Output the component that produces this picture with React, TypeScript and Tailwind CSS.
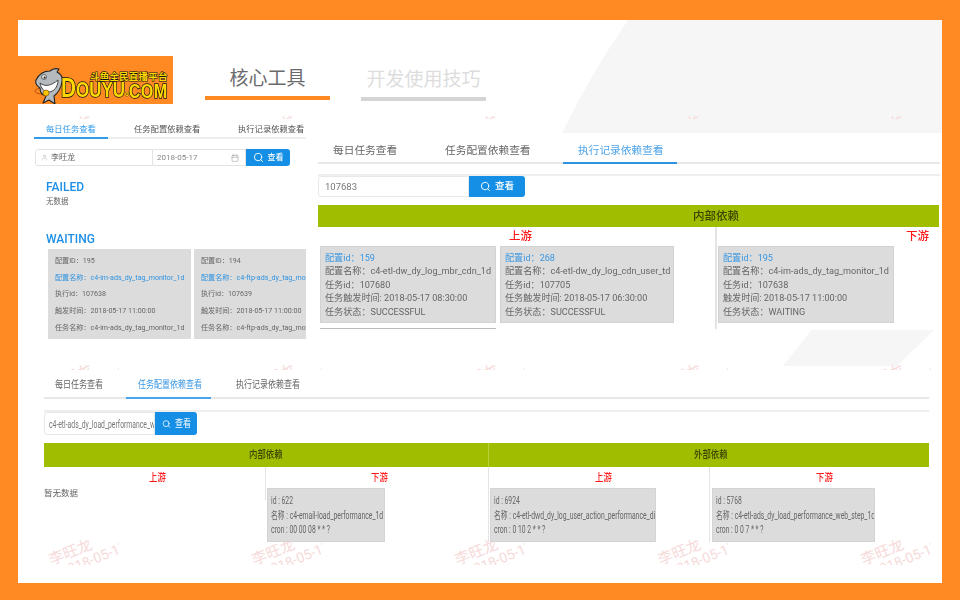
import { Calendar, Search, User } from "lucide-react"

const cjk = "font-['Roboto','Noto_Sans_CJK_SC',sans-serif]"

type Line = { text: string; blue?: boolean }

function Watermark() {
  return (
    <div className="w-[203px] shrink-0">
      <div className="w-[72px] h-[40px] overflow-hidden">
        <div className="-rotate-[22deg] origin-top-left translate-y-[14px] leading-[15px] text-[#f6dada] whitespace-nowrap">
          <div className="text-[15px]">李旺龙</div>
          <div className="text-[14px] pl-[6px]">2018-05-17 11:00:00</div>
        </div>
      </div>
    </div>
  )
}

function WatermarkStrip({ className, inner }: { className: string; inner: string }) {
  return (
    <div className={`absolute overflow-hidden pointer-events-none ${className}`}>
      <div className={`flex ${inner}`}>
        {[0, 1, 2, 3, 4].map((i) => (
          <Watermark key={i} />
        ))}
      </div>
    </div>
  )
}

function Logo() {
  return (
    <div className="relative w-[155px] h-[48px] bg-[#ff8a24] shrink-0 overflow-hidden">
      <svg className="absolute left-[16px] top-[12px]" width="36" height="37" viewBox="0 0 36 37">
        <ellipse cx="8" cy="23" rx="7" ry="3" fill="none" stroke="#b9560a" strokeWidth="1" />
        <path d="M2 12 C5 6 10 3 16 3 C18 1 21 0 25 1 L23 4 C27 6 29 10 28 14 C27 20 24 25 20 28 L21 36 L15 32 L9 35 L12 28 C8 27 6 24 6 20 C3 18 1 15 2 12 Z" fill="#b4babd" stroke="#222" strokeWidth="1.1" strokeLinejoin="round" />
        <path d="M6 15 C11 19 17 18 24 12 C24 19 20 24 14 24 C10 24 7 20 6 15 Z" fill="#fff" stroke="#222" strokeWidth="0.8" />
        <circle cx="10" cy="9" r="2.4" fill="#fff" stroke="#222" strokeWidth="0.7" />
        <circle cx="10.5" cy="9.5" r="1" fill="#111" />
        <circle cx="12" cy="25" r="3" fill="#ffc400" stroke="#8a5a00" strokeWidth="0.7" />
      </svg>
      <div className="absolute left-[43px] top-[19px] flex items-end font-['Liberation_Sans',sans-serif] font-bold text-[#ffd800] leading-none whitespace-nowrap [-webkit-text-stroke:1.6px_#111] [paint-order:stroke_fill] origin-left scale-x-[0.77]">
        <span className="text-[27px] leading-[27px]">D</span>
        <span className="text-[22px] leading-[24px]">OUYU</span>
        <span className="text-[8px] mb-[4px] [-webkit-text-stroke:0.6px_#111]">o</span>
        <span className="text-[21px] leading-[23px] tracking-[0.5px]">COM</span>
      </div>
      <div className="absolute left-[72px] top-[16px] font-['Noto_Sans_CJK_SC',sans-serif] font-bold text-[9.5px] leading-none text-[#ffd800] whitespace-nowrap [-webkit-text-stroke:1px_#111] [paint-order:stroke_fill] tracking-[0.2px]">
        斗鱼全民直播平台
      </div>
    </div>
  )
}

function NavTab({ label, active }: { label: string; active?: boolean }) {
  return (
    <div className={`w-[125px] text-center ${active ? "pt-px" : "pt-[2px]"}`}>
      <div className={`text-[19px] leading-[27px] ${active ? "text-[#6b6b6b]" : "text-[#dddddd]"}`}>{label}</div>
      <div className={`mt-[4px] h-[4px] ${active ? "bg-[#ff8a24]" : "bg-[#d4d4d4]"}`} />
    </div>
  )
}

function BlueButton({ className, squeeze }: { className: string; squeeze?: boolean }) {
  return (
    <div className={`flex items-center justify-center gap-[4px] bg-[#158fe6] text-white rounded-r-[3px] ${className}`}>
      <Search className={squeeze ? "w-[9px] h-[12px]" : "w-[11px] h-[11px]"} strokeWidth={2} />
      {squeeze ? (
        <span className="w-[16px]">
          <Narrow>查看</Narrow>
        </span>
      ) : (
        <span className="font-medium">查看</span>
      )}
    </div>
  )
}

function DailyCard({ id, name, exec }: { id: string; name: string; exec: string }) {
  const lines: Line[] = [
    { text: `配置ID：${id}` },
    { text: `配置名称：${name}`, blue: true },
    { text: `执行id：${exec}` },
    { text: "触发时间：2018-05-17 11:00:00" },
    { text: `任务名称：${name}` },
  ]
  return (
    <div className="w-[143px] shrink-0 h-[90px] bg-[#dcdcdc] pl-[7px] pt-[4px]">
      {lines.map((line) => (
        <div key={line.text} className={`text-[7.1px] leading-[16.7px] whitespace-nowrap ${line.blue ? "text-[#2f93e0]" : "text-[#666666]"}`}>
          {line.text}
        </div>
      ))}
    </div>
  )
}

function DailyPanel() {
  return (
    <div className="w-[272px] h-[220px] overflow-hidden shrink-0 blur-[0.3px]">
      <div className="flex h-[19px] border-b-2 border-[#eeeeee] text-[8.3px] leading-[18px] text-[#555555] whitespace-nowrap">
        <div className="w-[74px] h-[19px] border-b-2 border-[#2f9bea] pl-[12px] text-[#2f9bea]">每日任务查看</div>
        <div className="ml-[26px] w-[104px]">任务配置依赖查看</div>
        <div>执行记录依赖查看</div>
      </div>
      <div className="mt-[10px] flex h-[17px] text-[8px] text-[#666666]">
        <div className="ml-px w-[118px] flex items-center gap-[3px] pl-[5px] border border-[#e3e3e3] rounded-l-[3px]">
          <User className="w-[7px] h-[7px] text-[#bbbbbb]" />
          李旺龙
        </div>
        <div className="w-[93px] flex items-center justify-between pl-[4px] pr-[6px] border-y border-r border-[#e3e3e3] text-[#888888]">
          2018-05-17
          <Calendar className="w-[8px] h-[8px] text-[#aaaaaa]" />
        </div>
        <BlueButton className="w-[44px]" />
      </div>
      <div className="ml-[12px] mt-[13px] text-[12px] leading-[16px] font-medium text-[#1d8fe6]">FAILED</div>
      <div className="ml-[12px] text-[7.5px] leading-[13px] text-[#666666]">无数据</div>
      <div className="ml-[12px] mt-[23px] text-[12px] leading-[16px] font-medium text-[#1d8fe6]">WAITING</div>
      <div className="ml-[14px] mt-[2px] flex gap-[3px]">
        <DailyCard id="195" name="c4-im-ads_dy_tag_monitor_1d" exec="107638" />
        <DailyCard id="194" name="c4-ftp-ads_dy_tag_monitor_1d" exec="107639" />
      </div>
    </div>
  )
}

function RecordCard({ className, id, name, task, time, timeLabel, status }: { className: string; id: string; name: string; task: string; time: string; timeLabel: string; status: string }) {
  return (
    <div className={`h-[77px] bg-[#dcdcdc] border border-[#d2d2d2] pl-[4px] pt-[4.5px] text-[9.1px] leading-[13.5px] text-[#666666] whitespace-nowrap ${className}`}>
      <div className="text-[#3a97e2]">配置id：{id}</div>
      <div>配置名称：{name}</div>
      <div>任务id：{task}</div>
      <div>{timeLabel}: {time}</div>
      <div>任务状态：{status}</div>
    </div>
  )
}

function RecordPanel() {
  return (
    <div className="w-[622px] mt-[13px] h-[197px] bg-white overflow-hidden blur-[0.3px]">
      <div className="flex h-[31px] border-b-2 border-[#e8e8e8] text-[10.7px] leading-[36px] text-[#666666] whitespace-nowrap">
        <div className="ml-[15px] w-[112px]">每日任务查看</div>
        <div className="w-[118px]">任务配置依赖查看</div>
        <div className="ml-[15px] w-[84px] relative text-[#4ba3e8]">
          执行记录依赖查看
          <div className="absolute -left-[15px] -right-[15px] bottom-[-2px] h-[2px] bg-[#2f93e0]" />
        </div>
      </div>
      <div className="mt-[10px] h-[2px] bg-[#eeeeee]" />
      <div className="flex h-[21px]">
        <div className="w-[151px] pl-[6px] text-[9.5px] leading-[20px] text-[#777777] border border-[#e8e8e8] rounded-l-[3px]">107683</div>
        <BlueButton className="w-[56px] text-[9.5px]" />
      </div>
      <div className="mt-[8px] w-[621px] h-[22px] bg-[#a0bd00] pl-[375px] text-[11.5px] leading-[22px] font-medium text-[#3b4400]">内部依赖</div>
      <div className="flex">
        <div className="w-[399px] h-[102px] border-r-2 border-[#e4e4e4]">
          <div className="pl-[191px] text-[11.5px] leading-[19px] text-[#ff1a1a] font-medium">上游</div>
          <div className="flex gap-[4px] ml-[2px]">
            <RecordCard className="w-[176px]" id="159" name="c4-etl-dw_dy_log_mbr_cdn_1d" task="107680" timeLabel="任务触发时间" time="2018-05-17 08:30:00" status="SUCCESSFUL" />
            <RecordCard className="w-[174px]" id="268" name="c4-etl-dw_dy_log_cdn_user_td" task="107705" timeLabel="任务触发时间" time="2018-05-17 06:30:00" status="SUCCESSFUL" />
          </div>
          <div className="mt-[5px] ml-[2px] w-[176px] h-[1px] bg-[#bbbbbb]" />
        </div>
        <div className="flex-1">
          <div className="pl-[189px] text-[11.5px] leading-[19px] text-[#ff1a1a] font-medium">下游</div>
          <RecordCard className="w-[176px] ml-[1px]" id="195" name="c4-im-ads_dy_tag_monitor_1d" task="107638" timeLabel="触发时间" time="2018-05-17 11:00:00" status="WAITING" />
        </div>
      </div>
    </div>
  )
}

function Narrow({ children, className }: { children: React.ReactNode; className?: string }) {
  return <span className={`inline-block origin-left scale-x-[0.8] whitespace-nowrap ${className ?? ""}`}>{children}</span>
}

function Tight({ children }: { children: React.ReactNode }) {
  return <span className="inline-block origin-left scale-x-[0.68] whitespace-nowrap">{children}</span>
}

function ConfigCard({ width, id, name, cron }: { width: string; id: string; name: string; cron: string }) {
  return (
    <div className={`${width} h-[54px] bg-[#dcdcdc] border border-[#d4d4d4] pl-[3px] pt-[5px] text-[10px] leading-[14.6px] text-[#666666] overflow-hidden`}>
      <div><Tight>id : {id}</Tight></div>
      <div><Tight>名称 : {name}</Tight></div>
      <div><Tight>cron : {cron}</Tight></div>
    </div>
  )
}

function StreamLabel({ label, className }: { label: string; className: string }) {
  return (
    <div className={`text-[10.5px] leading-[21px] font-medium text-[#ff1a1a] ${className}`}>
      <Narrow>{label}</Narrow>
    </div>
  )
}

function ConfigPanel() {
  return (
    <div className="ml-[26px] mt-[30px] w-[885px] blur-[0.3px]">
      <div className="flex h-[29px] border-b-2 border-[#e8e8e8] text-[10px] leading-[30px] text-[#666666]">
        <div className="ml-[11px] w-[71px]"><Narrow>每日任务查看</Narrow></div>
        <div className="w-[85px] pl-[12px] relative text-[#3a97e2]">
          <Narrow>任务配置依赖查看</Narrow>
          <div className="absolute left-0 right-0 bottom-[-2px] h-[2px] bg-[#48a4ec]" />
        </div>
        <div className="ml-[25px]"><Narrow>执行记录依赖查看</Narrow></div>
      </div>
      <div className="mt-[11px] h-[2px] bg-[#eeeeee]" />
      <div className="flex h-[23px] text-[10px]">
        <div className="w-[111px] pl-[4px] leading-[23px] text-[#777777] border border-[#e8e8e8] rounded-l-[3px] overflow-hidden">
          <Tight>c4-etl-ads_dy_load_performance_web_step_1d</Tight>
        </div>
        <BlueButton className="w-[42px]" squeeze />
      </div>
      <div className="mt-[8px] flex h-[24px] bg-[#a0bd00] text-[10.5px] leading-[24px] font-medium text-[#3b4400]">
        <div className="w-[444px] pl-[205px]"><Narrow>内部依赖</Narrow></div>
        <div className="flex-1 border-l border-[#bcd03f] pl-[205px]"><Narrow>外部依赖</Narrow></div>
      </div>
      <div className="flex">
        <div className="w-[222px] h-[33px] border-r border-[#e4e4e4]">
          <StreamLabel label="上游" className="pl-[105px]" />
          <div className="-mt-[2px] text-[8.5px] leading-[14px] text-[#666666]">暂无数据</div>
        </div>
        <div className="w-[222px] pl-[1px]">
          <StreamLabel label="下游" className="pl-[104px]" />
          <ConfigCard width="w-[118px]" id="622" name="c4-email-load_performance_1d" cron="00 00 08 * * ?" />
        </div>
        <div className="w-[221px] pl-[1px] h-[75px] border-l border-[#e4e4e4]">
          <StreamLabel label="上游" className="pl-[105px]" />
          <ConfigCard width="w-[166px]" id="6924" name="c4-etl-dwd_dy_log_user_action_performance_di" cron="0 10 2 * * ?" />
        </div>
        <div className="flex-1 pl-[2px] h-[75px] border-l border-[#e4e4e4]">
          <StreamLabel label="下游" className="pl-[104px]" />
          <ConfigCard width="w-[163px]" id="5768" name="c4-etl-ads_dy_load_performance_web_step_1d" cron="0 0 7 * * ?" />
        </div>
      </div>
    </div>
  )
}

export default function App() {
  return (
    <div className={`w-[960px] h-[600px] bg-[#ff8a24] pt-[20px] pb-[17px] px-[18px] ${cjk}`}>
      <div className="relative h-full bg-white overflow-hidden">
        {/* pale slide decoration behind the screenshots */}
        <svg className="absolute inset-0" width="924" height="563" viewBox="0 0 924 563">
          <path d="M610 0 Q572 55 544 113 L924 113 L924 0 Z" fill="#f6f6f6" />
          <path d="M794 309 L917 309 L879 346 L765 346 Q778 330 794 309 Z" fill="#f6f6f6" />
        </svg>
        <WatermarkStrip className="left-0 right-0 top-[520px] h-[25px]" inner="pl-[29px]" />
        <WatermarkStrip className="left-0 right-0 top-[345px] h-[5px]" inner="pl-[29px]" />
        <WatermarkStrip className="left-0 right-0 top-[96px] h-[3px]" inner="pl-[29px]" />

        <div className="relative">
          <div className="flex items-start pt-[36px]">
            <Logo />
            <div className="flex gap-[31px] ml-[32px] pt-[8px]">
              <NavTab label="核心工具" active />
              <NavTab label="开发使用技巧" />
            </div>
          </div>
          <div className="flex items-start gap-[12px] ml-[16px] mt-[16px]">
            <DailyPanel />
            <RecordPanel />
          </div>
          <ConfigPanel />
        </div>
      </div>
    </div>
  )
}
